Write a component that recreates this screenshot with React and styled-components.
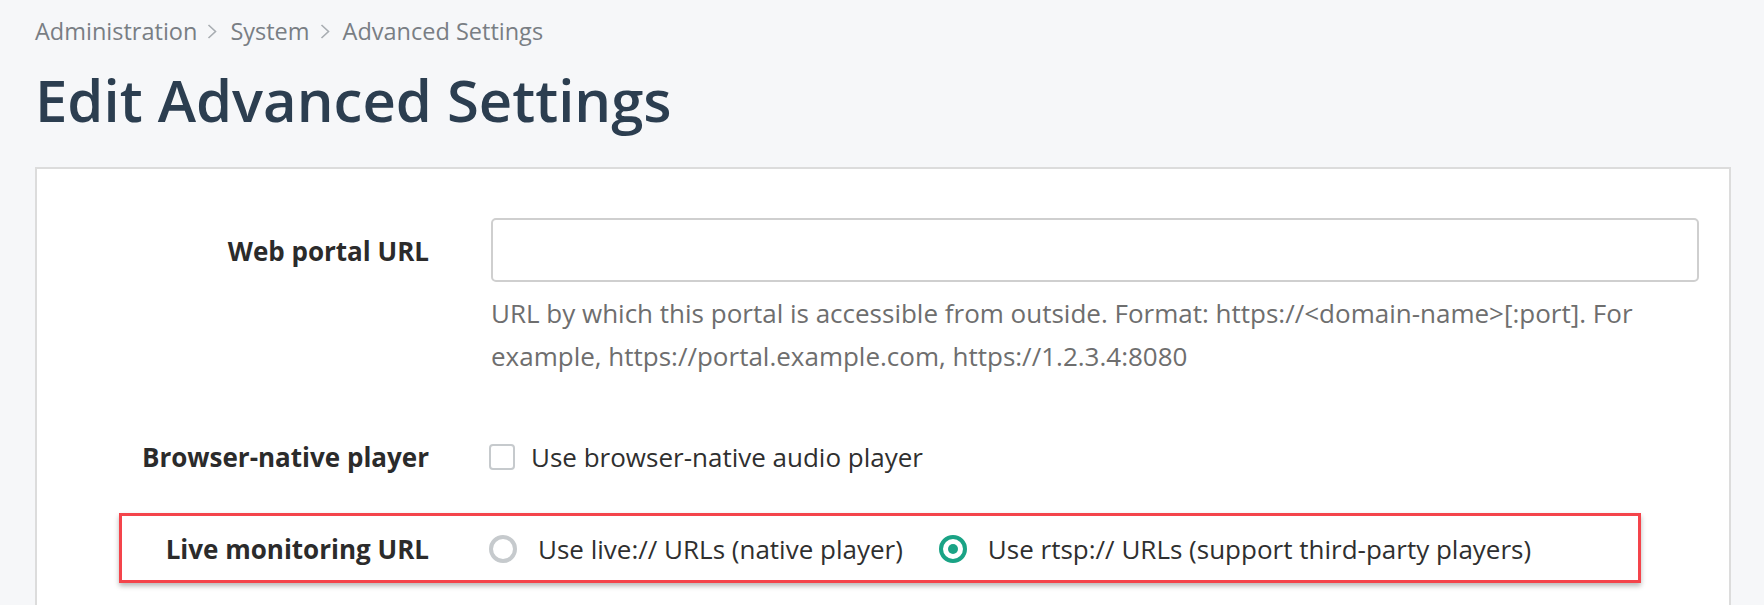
import React from 'react';
import styled, { createGlobalStyle } from 'styled-components';

const GlobalStyle = createGlobalStyle`
  body {
    margin: 0;
    background: #f6f7f9;
    font-family: "Open Sans", "Liberation Sans", sans-serif;
  }
`;

const Page = styled.div`
  padding: 16px 33px 0 35px;
  height: 605px;
  box-sizing: border-box;
  overflow: hidden;
`;

const Breadcrumbs = styled.nav`
  display: flex;
  align-items: center;
  font-size: 23.5px;
  line-height: 30px;
  color: #797e84;
`;

const Crumb = styled.span`
  white-space: nowrap;
`;

const Sep = styled.svg`
  width: 10px;
  height: 15px;
  margin: 1px 13px 0 10px;
  fill: none;
  stroke: #a8adb2;
  stroke-width: 1.6;
`;

const Title = styled.h1`
  margin: 18px 0 31px;
  font-size: 58px;
  line-height: 72px;
  font-weight: 600;
  color: #2c3e50;
`;

const Panel = styled.section`
  background: #fff;
  border: 2px solid #dcdcdc;
  border-bottom: none;
  padding: 49px 30px 40px 0;
  min-height: 500px;
`;

const Row = styled.div`
  position: relative;
  display: grid;
  grid-template-columns: 392px 1fr;
  column-gap: 62px;
  align-items: ${(p) => (p.$top ? 'start' : 'center')};
  margin-top: ${(p) => p.$mt || 0}px;
  min-height: 40px;

  ${(p) =>
    p.$highlight &&
    `
    &::after {
      content: '';
      position: absolute;
      left: 82px;
      right: 58px;
      top: -16px;
      bottom: -14px;
      border: 3px solid #f4444b;
      box-shadow: 0 3px 5px rgba(0, 0, 0, 0.28);
      pointer-events: none;
    }
  `}
`;

const Label = styled.label`
  text-align: right;
  font-size: 26px;
  font-weight: 700;
  color: #2b2b2b;
  line-height: ${(p) => (p.$tall ? '66px' : '40px')};
  white-space: nowrap;
`;

const Field = styled.div`
  display: flex;
  flex-direction: column;
`;

const TextInput = styled.input`
  box-sizing: border-box;
  width: 100%;
  height: 64px;
  border: 2px solid #cfcfcf;
  border-radius: 5px;
  background: #fff;
  font: inherit;
  font-size: 26px;
  padding: 0 16px;
  outline: none;
`;

const Help = styled.p`
  margin: 9.5px 0 0;
  font-size: 26px;
  line-height: 43px;
  color: #6e6e6e;
`;

const Options = styled.div`
  display: flex;
  align-items: center;
  gap: 38px;
`;

const Option = styled.label`
  display: flex;
  align-items: center;
  gap: ${(p) => (p.$radio ? 21 : 16)}px;
  font-size: 26px;
  line-height: 40px;
  color: #2f2f2f;
  white-space: nowrap;
`;

const CheckBox = styled.span`
  box-sizing: border-box;
  width: 26px;
  height: 26px;
  border: 2.5px solid #c6cacd;
  border-radius: 4px;
  background: #fff;
  margin-left: -2px;
`;

const Radio = styled.span`
  position: relative;
  box-sizing: border-box;
  width: 28px;
  height: 28px;
  border-radius: 50%;
  border: 4.5px solid ${(p) => (p.$checked ? '#1aa385' : '#c6cacd')};
  background: #fff;
  margin-left: -2px;

  &::after {
    content: '';
    display: ${(p) => (p.$checked ? 'block' : 'none')};
    position: absolute;
    left: 50%;
    top: 50%;
    width: 10px;
    height: 10px;
    border-radius: 50%;
    background: #1aa385;
    transform: translate(-50%, -50%);
  }
`;

const Chevron = () => (
  <Sep viewBox="0 0 10 15">
    <polyline points="1.5,1 8.5,7.5 1.5,14" />
  </Sep>
);

const crumbs = ['Administration', 'System', 'Advanced Settings'];

export default function App() {
  return (
    <>
      <GlobalStyle />
      <Page>
        <Breadcrumbs>
          {crumbs.map((c, i) => (
            <React.Fragment key={c}>
              {i > 0 && <Chevron />}
              <Crumb>{c}</Crumb>
            </React.Fragment>
          ))}
        </Breadcrumbs>
        <Title>Edit Advanced Settings</Title>
        <Panel>
          <Row $top>
            <Label $tall>Web portal URL</Label>
            <Field>
              <TextInput type="text" />
              <Help>
                URL by which this portal is accessible from outside. Format:
                https://&lt;domain-name&gt;[:port]. For example,
                https://portal.example.com, https://1.2.3.4:8080
              </Help>
            </Field>
          </Row>
          <Row $mt={59.5}>
            <Label>Browser-native player</Label>
            <Option>
              <CheckBox />
              Use browser-native audio player
            </Option>
          </Row>
          <Row $mt={52} $highlight>
            <Label>Live monitoring URL</Label>
            <Options>
              <Option $radio>
                <Radio />
                Use live:// URLs (native player)
              </Option>
              <Option $radio>
                <Radio $checked />
                Use rtsp:// URLs (support third-party players)
              </Option>
            </Options>
          </Row>
        </Panel>
      </Page>
    </>
  );
}
